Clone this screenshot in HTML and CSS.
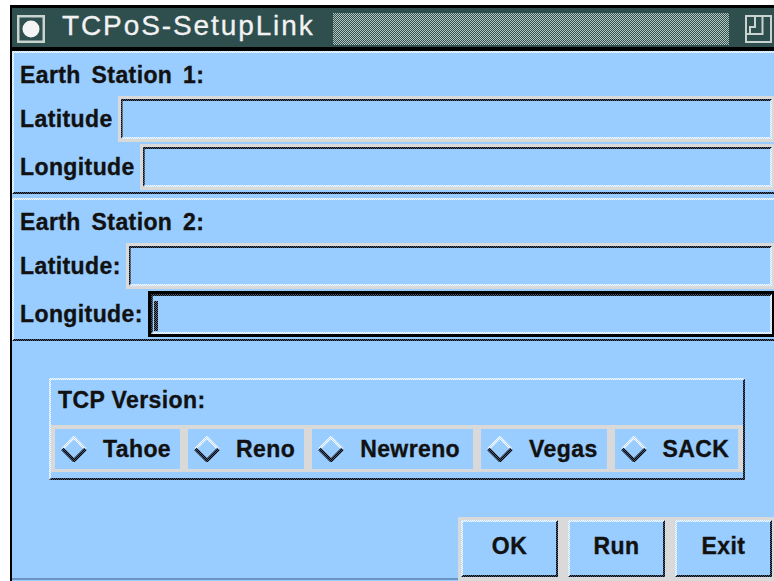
FILE: index.html
```html
<!DOCTYPE html>
<html lang="en">
<head>
<meta charset="utf-8">
<title>TCPoS-SetupLink</title>
<link rel="stylesheet" href="styles.css">
</head>
<body>
<!-- shared stipple fills for the radio diamonds -->
<svg class="defs" width="0" height="0" aria-hidden="true">
  <defs>
    <pattern id="dots-light" width="2" height="2" patternUnits="userSpaceOnUse">
      <rect width="2" height="2" fill="#b8dcff"/>
      <rect width="1" height="1" fill="#ffffff"/>
      <rect x="1" y="1" width="1" height="1" fill="#ffffff"/>
    </pattern>
    <pattern id="dots-dark" width="2" height="2" patternUnits="userSpaceOnUse">
      <rect width="2" height="2" fill="#3f5a76"/>
      <rect width="1" height="1" fill="#000000"/>
      <rect x="1" y="1" width="1" height="1" fill="#000000"/>
    </pattern>
  </defs>
</svg>

<div class="window">
  <header class="titlebar">
    <span class="tb-icon">
      <svg width="28" height="28" viewBox="0 0 28 28">
        <rect x="1.25" y="1.25" width="25.5" height="25.5" fill="none" stroke="#c9d3cf" stroke-width="2.5"/>
        <circle cx="14" cy="14" r="8.5" fill="#f4f4f4"/>
      </svg>
    </span>
    <span class="title">TCPoS-SetupLink</span>
    <span class="grip"></span>
    <span class="tb-icon">
      <svg width="27" height="28" viewBox="0 0 27 28">
        <rect x="1" y="1" width="25" height="26" fill="none" stroke="#c9d3cf" stroke-width="2"/>
        <path d="M1 19 H17.5 V2" fill="none" stroke="#c9d3cf" stroke-width="2"/>
        <path d="M5 19 V12 H10 V2" fill="none" stroke="#c9d3cf" stroke-width="2"/>
      </svg>
    </span>
  </header>

  <section class="station raised">
    <div class="heading">Earth Station 1:</div>
    <div class="row">
      <label class="label">Latitude</label>
      <div class="field"><div class="well sunken"></div></div>
    </div>
    <div class="row row-gap">
      <label class="label">Longitude</label>
      <div class="field"><div class="well sunken"></div></div>
    </div>
  </section>

  <section class="station station-next raised">
    <div class="heading">Earth Station 2:</div>
    <div class="row">
      <label class="label">Latitude:</label>
      <div class="field"><div class="well sunken"></div></div>
    </div>
    <div class="row row-gap">
      <label class="label">Longitude:</label>
      <div class="field focus"><div class="well sunken"><span class="caret"></span></div></div>
    </div>
  </section>

  <div class="lower">
    <div class="group raised">
      <div class="group-title">TCP Version:</div>
      <div class="choices">
        <div class="radio"><svg class="diamond" width="26" height="26" viewBox="0 0 26 26"><polyline points="1.5,13 13,1.5 24.5,13" fill="none" stroke="url(#dots-light)" stroke-width="3"/><polyline points="1.5,13 13,24.5 24.5,13" fill="none" stroke="url(#dots-dark)" stroke-width="3.5"/></svg><span>Tahoe</span></div>
        <div class="radio"><svg class="diamond" width="26" height="26" viewBox="0 0 26 26"><polyline points="1.5,13 13,1.5 24.5,13" fill="none" stroke="url(#dots-light)" stroke-width="3"/><polyline points="1.5,13 13,24.5 24.5,13" fill="none" stroke="url(#dots-dark)" stroke-width="3.5"/></svg><span>Reno</span></div>
        <div class="radio radio-wide"><svg class="diamond" width="26" height="26" viewBox="0 0 26 26"><polyline points="1.5,13 13,1.5 24.5,13" fill="none" stroke="url(#dots-light)" stroke-width="3"/><polyline points="1.5,13 13,24.5 24.5,13" fill="none" stroke="url(#dots-dark)" stroke-width="3.5"/></svg><span>Newreno</span></div>
        <div class="radio"><svg class="diamond" width="26" height="26" viewBox="0 0 26 26"><polyline points="1.5,13 13,1.5 24.5,13" fill="none" stroke="url(#dots-light)" stroke-width="3"/><polyline points="1.5,13 13,24.5 24.5,13" fill="none" stroke="url(#dots-dark)" stroke-width="3.5"/></svg><span>Vegas</span></div>
        <div class="radio"><svg class="diamond" width="26" height="26" viewBox="0 0 26 26"><polyline points="1.5,13 13,1.5 24.5,13" fill="none" stroke="url(#dots-light)" stroke-width="3"/><polyline points="1.5,13 13,24.5 24.5,13" fill="none" stroke="url(#dots-dark)" stroke-width="3.5"/></svg><span>SACK</span></div>
      </div>
    </div>

    <div class="actions">
      <button class="btn raised" type="button">OK</button>
      <button class="btn raised" type="button">Run</button>
      <button class="btn raised" type="button">Exit</button>
    </div>
  </div>
</div>
</body>
</html>
```

FILE: styles.css
```css
* {
  box-sizing: border-box;
}

html,
body {
  margin: 0;
  height: 100%;
  background: #ffffff;
  overflow: hidden;
}

body {
  font-family: "Liberation Sans", Arial, sans-serif;
  font-weight: bold;
  font-size: 23px;
  letter-spacing: 0.4px;
  color: #111111;
  -webkit-text-stroke: 0.35px #111111;
}

.defs {
  position: absolute;
  width: 0;
  height: 0;
}

/* ---------- bevels: 2px stipple borders ---------- */
.raised,
.sunken {
  --fill: #99ccff;
  --shade: #000000;
  --shade-base: #3f5a76;
  --light: #ffffff;
  --light-base: #b8dcff;
  position: relative;
  border: 2px solid transparent;
}

.raised {
  background:
    linear-gradient(var(--fill), var(--fill)) padding-box,
    repeating-conic-gradient(var(--shade) 0 25%, var(--shade-base) 0 50%) 0 0 / 2px 2px border-box;
}

.sunken {
  background:
    linear-gradient(var(--fill), var(--fill)) padding-box,
    repeating-conic-gradient(var(--light) 0 25%, var(--light-base) 0 50%) 0 0 / 2px 2px border-box;
}

.raised::before,
.sunken::before {
  content: "";
  position: absolute;
  inset: -2px;
  pointer-events: none;
  clip-path: polygon(0 0, 100% 0, calc(100% - 2px) 2px, 2px 2px, 2px calc(100% - 2px), 0 100%);
}

.raised::before {
  background: repeating-conic-gradient(var(--light) 0 25%, var(--light-base) 0 50%) 0 0 / 2px 2px;
}

.sunken::before {
  background: repeating-conic-gradient(var(--shade) 0 25%, var(--shade-base) 0 50%) 0 0 / 2px 2px;
}

/* ---------- window frame ---------- */
.window {
  margin: 5px 0 0 10px;
  width: 767px;
  border-left: 2px solid #000000;
  background: #99ccff;
}

.titlebar {
  display: flex;
  align-items: center;
  height: 46px;
  padding: 3px 5px 0 5px;
  background: #2f4f4f;
  border-top: 3px solid #000000;
  border-bottom: 4px solid #000000;
}

.tb-icon {
  display: flex;
  flex: none;
}

.title {
  margin-left: 17px;
  padding-bottom: 7px;
  font-weight: normal;
  font-size: 28px;
  letter-spacing: 1.9px;
  color: #f2f2f2;
  -webkit-text-stroke: 0.3px #f2f2f2;
  white-space: nowrap;
}

.grip {
  flex: 1;
  align-self: stretch;
  margin: 2px 16px 2px 18px;
  background: repeating-conic-gradient(#2f4f4f 0 25%, #b7c7c3 0 50%) 0 0 / 2px 2px;
}

/* ---------- earth station panels ---------- */
.station {
  padding: 4px 0 2px 6px;
}

.station-next {
  margin-top: 4px;
}

.heading {
  line-height: 36px;
  margin-bottom: 3px;
  word-spacing: 4px;
}

.row {
  display: flex;
  align-items: center;
}

.row-gap {
  margin-top: 2px;
}

.label {
  margin-right: 5px;
  white-space: nowrap;
}

.field {
  flex: 1;
  height: 46px;
  padding: 3px;
  background: #d9d9d9;
}

.field.focus {
  background: #000000;
}

.well {
  display: flex;
  align-items: center;
  height: 40px;
}

.caret {
  width: 4px;
  height: 30px;
  margin: 4px 0 0 1px;
  background: repeating-conic-gradient(#000000 0 25%, #5d6e80 0 50%) 0 0 / 2px 2px;
}

/* ---------- lower area: options and commands ---------- */
.lower {
  display: flex;
  flex-direction: column;
  height: 240px;
  padding-top: 37px;
  background:
    linear-gradient(#6a94c2, #6a94c2) left 0 bottom 1px / 100% 2px no-repeat,
    #99ccff;
}

.group {
  align-self: flex-start;
  margin-left: 37px;
  padding-bottom: 6px;
}

.group-title {
  line-height: 40px;
  padding-left: 7px;
  margin-bottom: 5px;
}

.choices {
  display: flex;
  gap: 8px;
  padding: 4px 5px 3px 4px;
  background: #d9d9d9;
}

.radio {
  display: flex;
  align-items: center;
  height: 40px;
  padding: 0 9px 0 6px;
  background: #99ccff;
  white-space: nowrap;
}

.radio-wide {
  padding-right: 13px;
}

.diamond {
  flex: none;
  margin-right: 16px;
}

.actions {
  align-self: flex-end;
  display: flex;
  gap: 10px;
  margin-top: 37px;
  padding: 3px 5px 4px 3px;
  background: #d9d9d9;
}

.btn {
  width: 97px;
  height: 57px;
  padding: 0 0 5px 0;
  font: inherit;
  letter-spacing: inherit;
  color: #111111;
  cursor: pointer;
}
```
